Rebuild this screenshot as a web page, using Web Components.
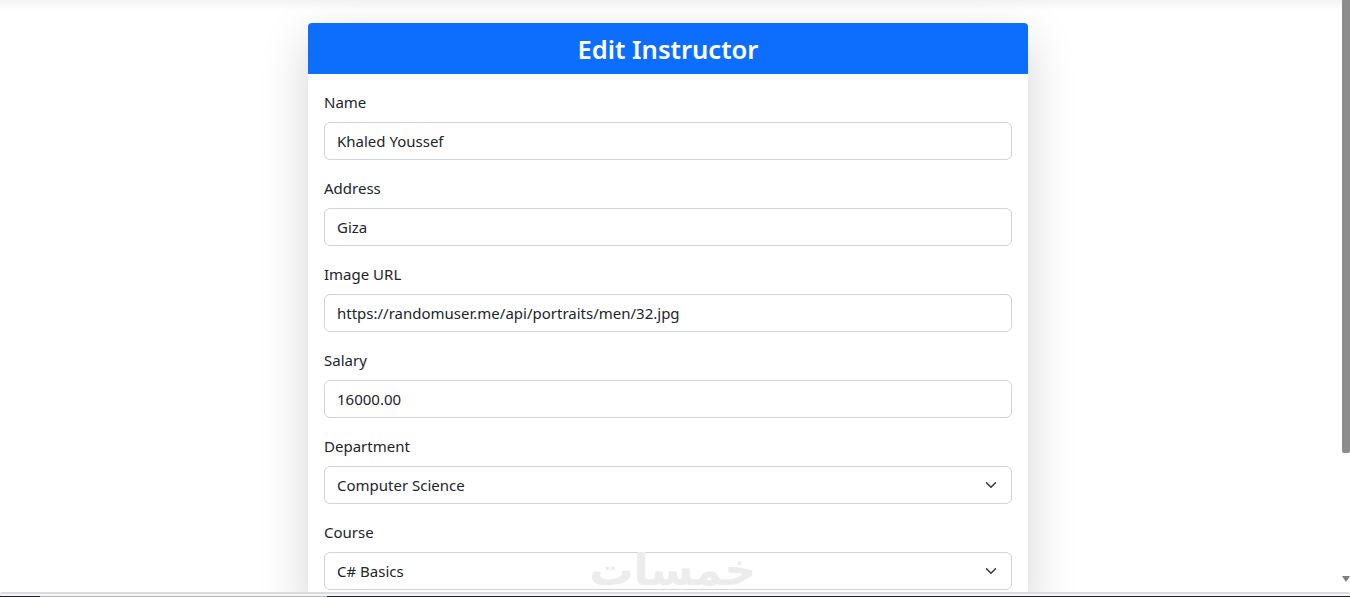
<!DOCTYPE html>
<html lang="en">
<head>
<meta charset="utf-8">
<title>Edit Instructor</title>
<style>
  html, body { margin: 0; height: 100%; overflow: hidden; background: #fff; }
  body { font-family: "Noto Sans", "Open Sans", sans-serif; color: #212529; }
</style>
</head>
<body>
<page-shell>
  <form-card heading="Edit Instructor">
    <form-field label="Name">Khaled Youssef</form-field>
    <form-field label="Address">Giza</form-field>
    <form-field label="Image URL">https://randomuser.me/api/portraits/men/32.jpg</form-field>
    <form-field label="Salary">16000.00</form-field>
    <form-field label="Department" select>Computer Science</form-field>
    <form-field label="Course" select>C# Basics</form-field>
  </form-card>
</page-shell>

<script>
// Window frame: scrolling area, fake scrollbar, watermark and the strip below
class PageShell extends HTMLElement {
  constructor() {
    super();
    this.attachShadow({ mode: 'open' });
    this.shadowRoot.innerHTML = `
      <style>
        :host { display: flex; flex-direction: column; height: 597px; position: relative; }
        .view { flex: 1; min-height: 0; display: flex; overflow: hidden; }
        .scroller { flex: 1; min-width: 0; overflow: hidden; display: flex; flex-direction: column; }
        .topbar { flex: none; height: 10px; background: linear-gradient(#f3f3f3, #fff); }
        .content { flex: none; display: flex; justify-content: center; padding: 13px 6px 0 0; }
        .bar { flex: none; width: 8px; background: #fff; position: relative; }
        .thumb { height: 453px; background: #8c8c8c; border-radius: 0 0 2px 2px; }
        .arrow {
          position: absolute; left: 0; top: 576px; width: 0; height: 0;
          border-left: 4px solid transparent; border-right: 4px solid transparent;
          border-top: 6px solid #7f7f7f;
        }
        .strip { flex: none; height: 5px; display: flex; flex-direction: column; }
        .line { height: 2px; background: #dcdcdc; border-radius: 3px 3px 0 0; }
        .pale { height: 2px; background: #f6f6f6; }
        .dark { height: 1px; background: linear-gradient(90deg, #1c2128 40px, #b5b5b5 40px, #b5b5b5 327px, #1c2128 327px); }
        .mark {
          position: absolute; left: 594px; top: 546px; width: 162px; text-align: center;
          font: 700 44px/48px "DejaVu Sans", sans-serif; color: #ececec; white-space: nowrap;
        }
      </style>
      <div class="view">
        <div class="scroller">
          <div class="topbar"></div>
          <div class="content"><slot></slot></div>
        </div>
        <div class="bar"><div class="thumb"></div><div class="arrow"></div></div>
      </div>
      <div class="strip"><div class="line"></div><div class="pale"></div><div class="dark"></div></div>
      <div class="mark" dir="rtl">خمسات</div>
    `;
  }
}

// Card with the blue title bar
class FormCard extends HTMLElement {
  constructor() {
    super();
    this.attachShadow({ mode: 'open' });
  }

  connectedCallback() {
    this.shadowRoot.innerHTML = `
      <style>
        :host {
          display: block; flex: none; width: 720px; background: #fff; border-radius: 4px;
          box-shadow: 0 16px 48px rgba(0, 0, 0, .175);
        }
        .header {
          box-sizing: border-box; height: 51px; padding-top: 1px; display: flex;
          align-items: center; justify-content: center;
          background: #0d6efd; color: #fff; border-radius: 4px 4px 0 0;
          font-size: 25.6px; font-weight: 600;
        }
        .body { padding: 16px; display: flex; flex-direction: column; gap: 16px; }
      </style>
      <div class="header">${this.getAttribute('heading')}</div>
      <div class="body"><slot></slot></div>
    `;
  }
}

// Label plus a text box, or a dropdown when the select attribute is set
class FormField extends HTMLElement {
  constructor() {
    super();
    this.attachShadow({ mode: 'open' });
  }

  connectedCallback() {
    const chevron = this.hasAttribute('select')
      ? `<svg viewBox="0 0 16 16" width="16" height="12" preserveAspectRatio="xMidYMid meet"><path fill="none" stroke="#343a40" stroke-linecap="round" stroke-linejoin="round" stroke-width="2" d="M2 5l6 6 6-6"/></svg>`
      : '';
    this.shadowRoot.innerHTML = `
      <style>
        :host { display: block; font-size: 15px; color: #212529; }
        .label { height: 24px; line-height: 24px; margin-bottom: 8px; }
        .control {
          box-sizing: border-box; height: 38px; padding: 0 12px; display: flex;
          align-items: center; justify-content: space-between;
          border: 1px solid #ced4da; border-radius: 6px; background: #fff;
        }
      </style>
      <div class="label">${this.getAttribute('label')}</div>
      <div class="control"><span><slot></slot></span>${chevron}</div>
    `;
  }
}

customElements.define('page-shell', PageShell);
customElements.define('form-card', FormCard);
customElements.define('form-field', FormField);
</script>
</body>
</html>
